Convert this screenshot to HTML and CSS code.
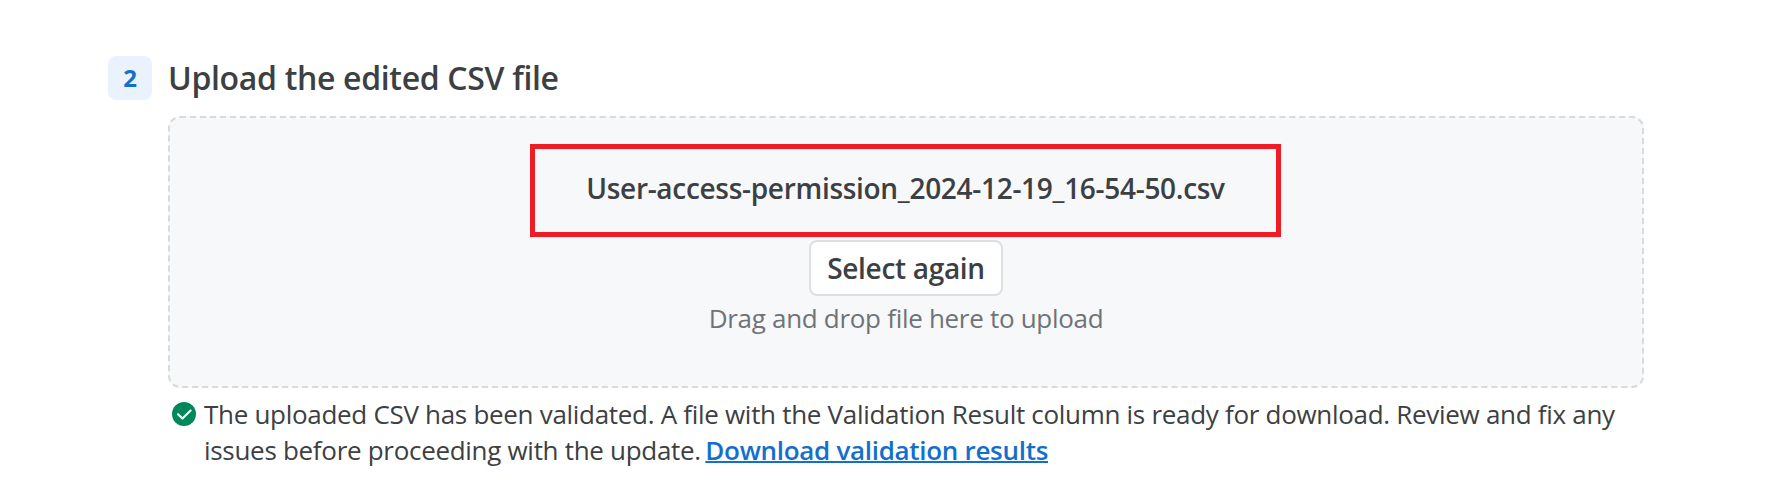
FILE: index.html
```html
<!DOCTYPE html>
<html lang="en">
<head>
  <meta charset="UTF-8">
  <meta name="viewport" content="width=device-width, initial-scale=1.0">
  <title>Upload CSV</title>
  <link rel="stylesheet" href="styles.css">
</head>
<body>
  <section class="step">
    <div class="step-number">2</div>
    <div class="step-content">
      <h2>Upload the edited CSV file</h2>
      <div class="dropzone">
        <div class="file-name">User-access-permission_2024-12-19_16-54-50.csv</div>
        <button class="select-btn" type="button">Select again</button>
        <span class="hint">Drag and drop file here to upload</span>
      </div>
      <div class="status">
        <svg class="status-icon" viewBox="0 0 24 24" width="24" height="24">
          <circle cx="12" cy="12" r="12" fill="#00875a"/>
          <path d="M6 12.2l4.4 4.4 8.2-8" fill="none" stroke="#fff" stroke-width="2.1" stroke-linecap="round" stroke-linejoin="round"/>
        </svg>
        <p class="status-text">The uploaded CSV has been validated. A file with the Validation Result column is ready for download. Review and fix any issues before proceeding with the update. <a href="#">Download validation results</a></p>
      </div>
    </div>
  </section>
</body>
</html>
```
FILE: styles.css
```css
:root {
  --text-color: #3c4043;
  --muted-color: #6e7377;
  --accent: #146fcc;
  --accent-bg: #eaf3fd;
  --zone-bg: #f7f8fa;
  --border: #d9dadb;
  --highlight: #ee1c25;
}
* {
  box-sizing: border-box;
}
body {
  margin: 0;
  background: #fff;
  color: var(--text-color);
  font-family: "Open Sans", sans-serif;
}
.step {
  display: flex;
  gap: 16px;
  padding: 56px 124px 0 108px;
}
.step-number {
  flex: none;
  width: 44px;
  height: 44px;
  border-radius: 8px;
  background: var(--accent-bg);
  color: var(--accent);
  font-size: 24px;
  font-weight: 700;
  line-height: 44px;
  text-align: center;
}
.step-content {
  flex: 1;
}
h2 {
  margin: 0 0 16px;
  font-size: 32px;
  font-weight: 600;
  letter-spacing: -0.33px;
  line-height: 44px;
}
.dropzone {
  display: flex;
  flex-direction: column;
  align-items: center;
  height: 272px;
  padding-top: 26px;
  border: 2px dashed var(--border);
  border-radius: 12px;
  background: var(--zone-bg);
}
.file-name {
  width: 751px;
  height: 93px;
  margin-right: 1px;
  border: 5px solid var(--highlight);
  font-size: 28px;
  font-weight: 600;
  letter-spacing: -0.3px;
  line-height: 79px;
  text-align: center;
}
.select-btn {
  width: 194px;
  height: 56px;
  margin-top: 3px;
  padding: 0;
  border: 2px solid #dedfe0;
  border-radius: 8px;
  background: #fff;
  color: var(--text-color);
  font-family: inherit;
  font-size: 28px;
  font-weight: 600;
  letter-spacing: -0.3px;
  line-height: 52px;
}
.hint {
  margin-top: 4px;
  color: var(--muted-color);
  font-size: 26px;
  letter-spacing: -0.3px;
  line-height: 36px;
}
.status {
  display: flex;
  gap: 8px;
  padding: 8px 0 0 4px;
}
.status-icon {
  flex: none;
  margin-top: 6px;
}
.status-text {
  margin: 0;
  font-size: 26px;
  letter-spacing: -0.3px;
  line-height: 36px;
}
.status-text a {
  margin-left: -2px;
  color: var(--accent);
  font-weight: 600;
  text-decoration-thickness: 2px;
}
```
